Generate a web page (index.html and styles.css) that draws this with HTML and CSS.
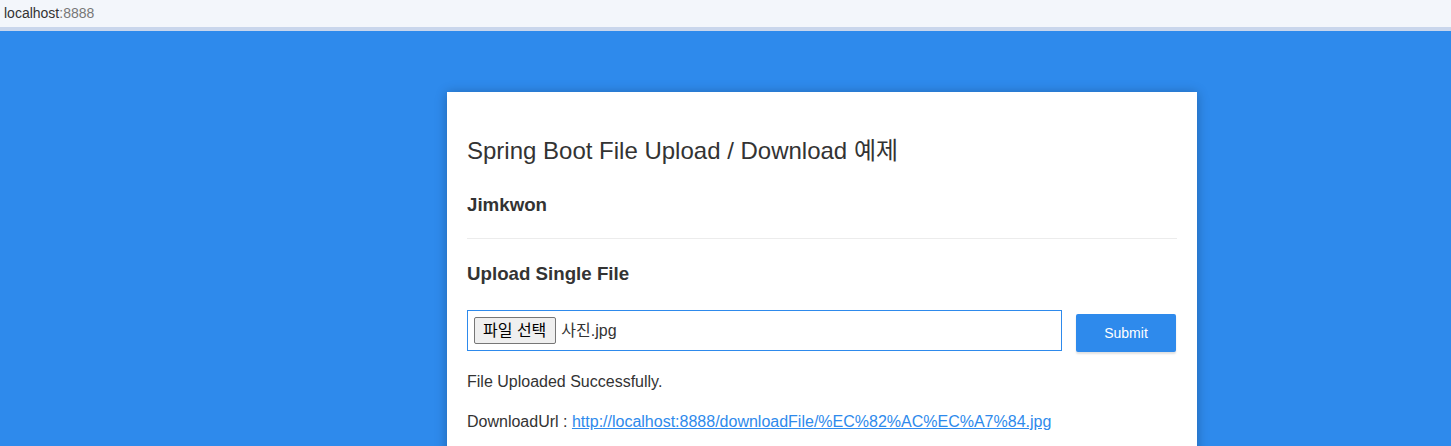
FILE: index.html
```
<!DOCTYPE html>
<html lang="ko">
  <head>
    <meta charset="UTF-8" />
    <meta name="viewport" content="width=device-width, initial-scale=1.0" />
    <title>Spring Boot File Upload / Download</title>
    <link rel="stylesheet" href="styles.css">
  </head>
  <body>
    <div class="addr_bar"><span class="host">localhost</span><span class="port">:8888</span></div>
    <div class="page">
      <div class="upload-container">
        <div class="upload-header">
          <h2>Spring Boot File Upload / Download 예제</h2>
          <h3>Jimkwon</h3>
        </div>
        <div class="upload-content">
          <div class="single-upload">
            <h3>Upload Single File</h3>
            <form class="upload-form">
              <div class="file-input">
                <span class="file-btn">파일 선택</span>
                <span class="file-name">사진.jpg</span>
              </div>
              <button type="button" class="primary submit-btn">Submit</button>
            </form>
            <div class="upload-response">
              <p>File Uploaded Successfully.</p>
              <p>DownloadUrl : <a href="#">http://localhost:8888/downloadFile/%EC%82%AC%EC%A7%84.jpg</a></p>
            </div>
          </div>
        </div>
      </div>
    </div>
  </body>
</html>
```

FILE: styles.css
```
* {
  box-sizing: border-box;
}
html,
body {
  height: 100%;
  overflow: hidden;
}
body {
  margin: 0;
  padding: 0;
  font-family: "Liberation Sans", Arial, "Noto Sans CJK KR", sans-serif;
  font-size: 16px;
  line-height: 1.58;
  color: #333;
  background-color: #2e8aec;
}

/* 주소창 */
.addr_bar {
  height: 31px;
  padding: 4px 0 0 4px;
  background: #f3f6fb;
  border-bottom: 4px solid #c9d6ec;
  font-size: 14px;
  line-height: 19px;
}
.addr_bar .host {
  color: #333;
}
.addr_bar .port {
  color: #777;
}

.page {
  padding-top: 61px;
}
h2,
h3 {
  margin-top: 20px;
  margin-bottom: 20px;
}
h2 {
  font-size: 24px;
  font-weight: 400;
}
h3 {
  font-size: 18.72px;
  font-weight: 700;
}
a {
  color: #2e8aec;
}
.upload-container {
  width: 750px;
  margin: 0 0 0 447px;
  background-color: #fff;
  box-shadow: 0 1px 11px rgba(0, 0, 0, 0.27);
  min-height: 400px;
  padding: 20px;
}
.upload-header {
  border-bottom: 1px solid #ececec;
}
.upload-header h3 {
  margin-bottom: 19px;
}

.upload-form {
  display: flex;
  align-items: flex-start;
  gap: 14px;
  margin-top: 21px;
}
.file-input {
  width: 595px;
  height: 41px;
  border: 1px solid #2e8aec;
  padding: 6px;
  display: flex;
  align-items: center;
  gap: 5px;
  font-size: 16px;
}
.file-btn {
  height: 27px;
  padding: 0 9px 0 8px;
  line-height: 25px;
  background: #efefef;
  border: 1px solid #767676;
  border-radius: 2px;
  color: #000;
}
.file-name {
  color: #333;
}
button {
  font-family: inherit;
  font-size: 14px;
  border: 1px solid transparent;
  line-height: 100%;
  padding: 0.6rem 1rem;
  border-radius: 2px;
  min-height: 38px;
  cursor: pointer;
}
button.primary {
  background-color: #2e8aec;
  box-shadow: 0 2px 2px 0 rgba(0, 0, 0, 0.12);
  color: #fff;
}
.submit-btn {
  min-width: 100px;
  margin-top: 4px;
}
.upload-response p {
  margin: 16px 0;
  line-height: 24px;
}
.upload-response p:first-child {
  margin-top: 18px;
}
```
